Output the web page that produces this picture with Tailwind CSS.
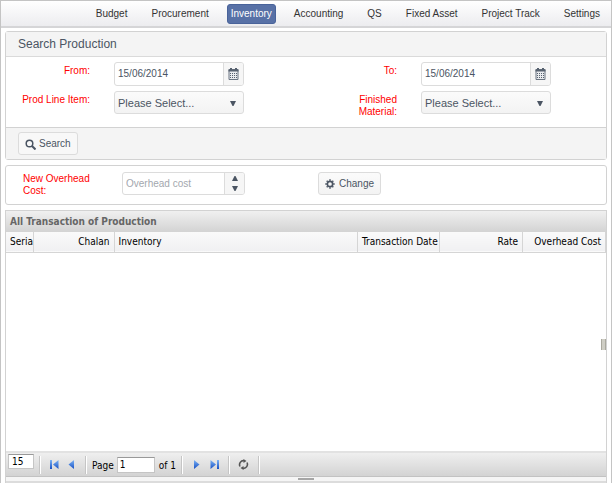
<!DOCTYPE html>
<html lang="en">
<head>
<meta charset="utf-8">
<meta name="viewport" content="width=device-width, initial-scale=1">
<title>Search Production</title>
<script src="https://cdn.jsdelivr.net/npm/@tailwindcss/browser@4"></script>
</head>
<body class="bg-white font-['Liberation_Sans',Arial,sans-serif] text-[10px] leading-3 text-[#4b5563]">
<svg class="absolute h-0 w-0" aria-hidden="true">
  <symbol id="calendar" viewBox="0 0 11 12">
    <path d="M1 1.500h9v10H1z" fill="#e9ebee" stroke="#6b7582"/>
    <path d="M.5 1.500h10v2H.5zM2 0h2v2H2zM7 0h2v2H7z" fill="#56616f"/>
    <path d="M2 5h1v1H2zM4 5h1v1H4zM6 5h1v1H6zM8 5h1v1H8zM2 7h1v1H2zM4 7h1v1H4zM6 7h1v1H6zM8 7h1v1H8zM2 9h1v1H2zM4 9h1v1H4zM6 9h1v1H6zM8 9h1v1H8z" fill="#56616f"/>
  </symbol>
  <symbol id="down" viewBox="0 0 6 5"><path d="M0 0h6L3.500 5h-1z" fill="#4b5563"/></symbol>
  <symbol id="up" viewBox="0 0 6 5"><path d="M0 5h6L3.500 0h-1z" fill="#4b5563"/></symbol>
  <linearGradient id="blue" x1="0" y1="0" x2="0" y2="1"><stop offset="0" stop-color="#7db4f5"/><stop offset="1" stop-color="#1750c4"/></linearGradient>
</svg>
<div class="flex min-h-screen flex-col border-x border-t border-[#c4c4c4]">
  <nav class="flex h-[27px] shrink-0 items-center justify-end gap-6 border-b-2 border-[#d5d5d7] bg-linear-to-b from-white to-[#ececef] pr-[11px] text-[#333]">
    <a href="#">Budget</a>
    <a href="#">Procurement</a>
    <a href="#" class="-mx-[6px] rounded-[3px] border border-[#49639a] bg-[#5871a6] px-[3px] py-[3px] text-white">Inventory</a>
    <a href="#">Accounting</a>
    <a href="#">QS</a>
    <a href="#">Fixed Asset</a>
    <a href="#">Project Track</a>
    <a href="#">Settings</a>
  </nav>
  <main class="flex grow flex-col gap-[5px] px-1 pt-[3px]">
    <form class="rounded-[3px] border border-[#d2d2d2]">
      <h1 class="border-b border-[#dadada] bg-[#f4f4f4] px-3 py-[3px] text-xs leading-[18px]">Search Production</h1>
      <div class="grid grid-cols-2 gap-x-[14px] gap-y-[5px] pt-[5px] pb-[9px]">
        <div class="flex gap-6">
          <label for="from" class="w-[84px] pt-[3px] text-right text-[#f00]">From:</label>
          <div class="flex h-6 w-[130px] overflow-hidden rounded-[3px] border border-[#dcdcdc]">
            <input id="from" value="15/06/2014" class="min-w-0 grow px-[3px]">
            <button type="button" aria-label="Pick start date" class="flex w-5 shrink-0 items-center justify-center border-l border-[#dcdcdc] bg-[#f6f6f6]"><svg class="h-3 w-[11px]"><use href="#calendar"/></svg></button>
          </div>
        </div>
        <div class="flex gap-6">
          <label for="to" class="w-[84px] pt-[3px] text-right text-[#f00]">To:</label>
          <div class="flex h-6 w-[130px] overflow-hidden rounded-[3px] border border-[#dcdcdc]">
            <input id="to" value="15/06/2014" class="min-w-0 grow px-[3px]">
            <button type="button" aria-label="Pick end date" class="flex w-5 shrink-0 items-center justify-center border-l border-[#dcdcdc] bg-[#f6f6f6]"><svg class="h-3 w-[11px]"><use href="#calendar"/></svg></button>
          </div>
        </div>
        <div class="flex gap-6">
          <label for="line" class="w-[84px] pt-[3px] text-right text-[#f00]">Prod Line Item:</label>
          <div class="relative h-[23px] w-[130px]">
            <select id="line" class="h-full w-full appearance-none rounded-[3px] border border-[#dcdcdc] bg-linear-to-b from-[#fbfbfb] to-[#f3f3f3] px-[3px] text-[11px]"><option>Please Select...</option></select>
            <svg class="pointer-events-none absolute top-[10px] right-2 h-[5px] w-[6px]"><use href="#down"/></svg>
          </div>
        </div>
        <div class="flex gap-6">
          <label for="material" class="w-[84px] pt-[3px] pl-8 text-right text-[#f00]">Finished Material:</label>
          <div class="relative h-[23px] w-[130px]">
            <select id="material" class="h-full w-full appearance-none rounded-[3px] border border-[#dcdcdc] bg-linear-to-b from-[#fbfbfb] to-[#f3f3f3] px-[3px] text-[11px]"><option>Please Select...</option></select>
            <svg class="pointer-events-none absolute top-[10px] right-2 h-[5px] w-[6px]"><use href="#down"/></svg>
          </div>
        </div>
      </div>
      <div class="border-t border-[#d2d2d2] bg-[#f4f4f4] px-3 py-1">
        <button type="button" class="flex h-[23px] items-center gap-[3px] rounded-[3px] border border-[#dcdcdc] bg-[#f8f8f8] px-[6px]">
          <svg class="mt-[2px] h-[11px] w-[11px]" viewBox="0 0 11 11" fill="none" stroke="#4b5563"><circle cx="4.500" cy="4.500" r="3.300" stroke-width="1.500"/><path d="M7 7l3.500 3.500" stroke-width="2"/></svg>Search</button>
      </div>
    </form>
    <form class="flex items-start rounded-[3px] border border-[#d2d2d2] pt-[6px] pr-3 pb-[7px] pl-[17px]">
      <label for="cost" class="w-[99px] pt-px pr-5 text-[#f00]">New Overhead Cost:</label>
      <div class="flex h-[23px] w-[123px] overflow-hidden rounded-[3px] border border-[#dcdcdc]">
        <input id="cost" placeholder="Overhead cost" class="min-w-0 grow px-[3px] placeholder:text-[#a3a7ae]">
        <div class="flex w-5 shrink-0 flex-col border-l border-[#dcdcdc] bg-[#f6f6f6]">
          <button type="button" aria-label="Increase" class="flex grow items-center justify-center"><svg class="h-[5px] w-[6px]"><use href="#up"/></svg></button>
          <button type="button" aria-label="Decrease" class="flex grow items-center justify-center"><svg class="h-[5px] w-[6px]"><use href="#down"/></svg></button>
        </div>
      </div>
      <button type="button" class="ml-[73px] flex h-[23px] items-center gap-1 rounded-[3px] border border-[#dcdcdc] bg-linear-to-b from-[#fbfbfb] to-[#f3f3f3] px-[6px]">
        <svg class="h-[10px] w-[10px]" viewBox="0 0 10 10" fill="none" stroke="#4b5563"><circle cx="5" cy="5" r="2.700" stroke-width="1.700"/><path d="M5 .3v1.500M5 8.200v1.500M.3 5h1.500M8.200 5h1.500M1.700 1.700l1 1M7.300 7.300l1 1M8.300 1.700l-1 1M2.700 7.300l-1 1" stroke-width="1.500"/></svg>Change</button>
    </form>
    <section class="relative flex grow flex-col border-x border-t border-[#d2d2d2] font-['DejaVu_Sans_Condensed','DejaVu_Sans',sans-serif] text-black">
      <h2 class="h-[21px] bg-linear-to-b from-[#f0f0f0] to-[#d3d3d3] px-1 text-[10px] leading-[21px] font-bold text-[#666]">All Transaction of Production</h2>
      <table class="w-full table-fixed">
        <colgroup><col class="w-[27px]"><col class="w-[81px]"><col><col class="w-[82px]"><col class="w-[83px]"><col class="w-[83px]"></colgroup>
        <thead>
          <tr class="h-5 border-b border-[#d5d5d5] bg-linear-to-b from-[#fafafa] to-[#f0f0f2] whitespace-nowrap *:border-r *:border-[#d5d5d5] *:pl-1 *:font-normal">
            <th class="text-left">Seria</th>
            <th class="pr-1 text-right">Chalan</th>
            <th class="text-left">Inventory</th>
            <th class="text-left">Transaction Date</th>
            <th class="pr-1 text-right">Rate</th>
            <th class="pr-1 text-right">Overhead Cost</th>
          </tr>
        </thead>
      </table>
      <div class="grow"></div>
      <div class="flex h-[26px] items-center border-t-2 border-b border-t-[#e2e2e2] border-b-[#c2c2c2] bg-linear-to-b from-[#efefef] to-[#d3d3d3] pl-[2px]">
        <input aria-label="Rows per page" value="15" class="mt-px h-[15px] w-[26px] self-start border border-[#c5c5c5] border-t-[#999] bg-white px-[3px]">
        <span class="mr-[9px] ml-[5px] h-[18px] w-[2px] border-l border-[#c5c5c5] bg-white"></span>
        <button type="button" aria-label="First page" class="mr-[9px]"><svg class="h-[9px] w-[9px]" viewBox="0 0 9 9"><path d="M0 0h2v9H0zM8.500 0v9L3 4.500z" fill="url(#blue)"/></svg></button>
        <button type="button" aria-label="Previous page" class="mr-[11px]"><svg class="h-[9px] w-[6px]" viewBox="0 0 6 9"><path d="M6 0v9L.5 4.500z" fill="url(#blue)"/></svg></button>
        <span class="mr-[5px] h-[18px] w-[2px] border-l border-[#c5c5c5] bg-white"></span>
        <label for="page" class="mr-[3px] pt-[2px]">Page</label>
        <input id="page" value="1" class="mr-1 h-4 w-[38px] border border-[#c5c5c5] border-t-[#999] bg-white px-[2px]">
        <span class="pt-[2px]">of 1</span>
        <span class="mr-[11px] ml-[5px] h-[18px] w-[2px] border-l border-[#c5c5c5] bg-white"></span>
        <button type="button" aria-label="Next page" class="mr-[10px]"><svg class="h-[9px] w-[6px]" viewBox="0 0 6 9"><path d="M0 0v9l5.500-4.500z" fill="url(#blue)"/></svg></button>
        <button type="button" aria-label="Last page" class="mr-[9px]"><svg class="h-[9px] w-[9px]" viewBox="0 0 9 9"><path d="M7 0h2v9H7zM.5 0v9L6 4.500z" fill="url(#blue)"/></svg></button>
        <span class="mr-2 h-[18px] w-[2px] border-l border-[#c5c5c5] bg-white"></span>
        <button type="button" aria-label="Refresh"><svg class="h-[11px] w-[11px]" viewBox="0 0 11 11"><path d="M2 7.500A4 4 0 0 1 6 1.700M9 3.500A4 4 0 0 1 5 9.300" fill="none" stroke="#555" stroke-width="1.600"/><path d="M5.500 0l3 2-3 2zM5.500 7l-3 2 3 2z" fill="#555"/></svg></button>
        <span class="ml-[9px] h-[18px] w-[2px] border-l border-[#c5c5c5] bg-white"></span>
      </div>
      <div class="flex h-[6px] items-center justify-center border-b-2 border-[#dcdcdc] bg-[#f5f5f5]"><span class="h-[2px] w-4 bg-[#a6a6a6]"></span></div>
      <span class="absolute top-1/2 right-0 -mt-2 h-[11px] w-[5px] border-x border-[#aaa99f] bg-[#cfcec5]"></span>
    </section>
  </main>
</div>
</body>
</html>
